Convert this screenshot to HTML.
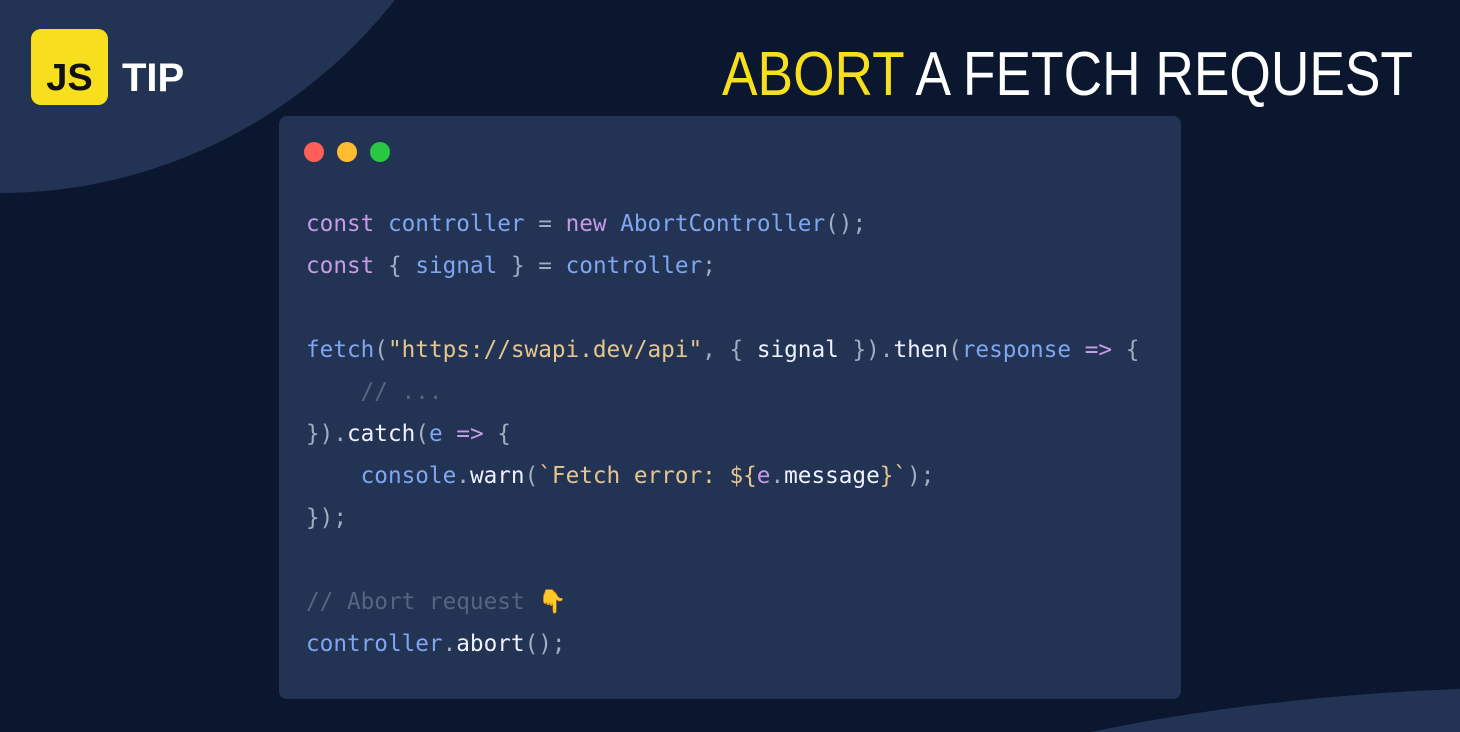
<!DOCTYPE html>
<html><head><meta charset="utf-8"><style>
html,body{margin:0;padding:0;width:1460px;height:732px;overflow:hidden;background:#0b172f}
#w{width:1460px;height:732px;overflow:hidden;position:relative;background:#0b172f;font-family:"Liberation Sans",sans-serif}
.card{position:absolute;left:279px;top:116px;width:902px;height:583px;background:#223354;border-radius:8px}
.dot{position:absolute;top:142px;width:20px;height:20px;border-radius:50%}
pre{position:absolute;left:306px;top:203px;margin:0;font-family:"DejaVu Sans Mono",monospace;font-size:22.7px;line-height:42px;color:#eef2ff}
.k{color:#c79be6}.b{color:#7fa6f0}.s{color:#e6c68e}.p{color:#a3acc2}.c{color:#59647e}.w{color:#eef2ff}
</style></head><body><div id="w">
<svg style="position:absolute;left:0;top:0" width="1460" height="732"><ellipse cx="0" cy="-330" rx="509" ry="523" fill="#223354"/><ellipse cx="1560" cy="1000" rx="909" ry="313" fill="#223354"/></svg>
<div style="position:absolute;left:31px;top:29px;width:77px;height:76px;background:#f7df1e;border-radius:10px"></div>
<div style="position:absolute;left:31px;top:54px;width:77px;text-align:center;font-weight:bold;font-size:38px;line-height:40px;color:#111;padding-top:4px">JS</div>
<div style="position:absolute;left:122px;top:56px;font-weight:bold;font-size:40px;line-height:44px;color:#fff">TIP</div>
<svg style="position:absolute;left:0;top:0" width="1460" height="120"><text x="1413" y="95" text-anchor="end" font-family="Liberation Sans" font-size="62" textLength="691" lengthAdjust="spacingAndGlyphs" fill="#fff"><tspan fill="#f7df1e">ABORT</tspan> A FETCH REQUEST</text></svg>
<div class="card"></div>
<div class="dot" style="left:304px;background:#fe5f57"></div>
<div class="dot" style="left:337px;background:#febc2e"></div>
<div class="dot" style="left:370px;background:#28c840"></div>
<pre><span class="k">const</span> <span class="b">controller</span> <span class="p">=</span> <span class="k">new</span> <span class="b">AbortController</span><span class="p">();</span>
<span class="k">const</span> <span class="p">{</span> <span class="b">signal</span> <span class="p">}</span> <span class="p">=</span> <span class="b">controller</span><span class="p">;</span>

<span class="b">fetch</span><span class="p">(</span><span class="s">"https://swapi.dev/api"</span><span class="p">,</span> <span class="p">{</span> <span class="w">signal</span> <span class="p">}).</span><span class="w">then</span><span class="p">(</span><span class="b">response</span> <span class="k">=&gt;</span> <span class="p">{</span>
    <span class="c">// ...</span>
<span class="p">}).</span><span class="w">catch</span><span class="p">(</span><span class="b">e</span> <span class="k">=&gt;</span> <span class="p">{</span>
    <span class="b">console</span><span class="p">.</span><span class="w">warn</span><span class="p">(</span><span class="s">`Fetch error: ${</span><span class="k">e</span><span class="p">.</span><span class="w">message</span><span class="s">}`</span><span class="p">);</span>
<span class="p">});</span>

<span class="c">// Abort request</span> <span style="color:#f7c948">👇</span>
<span class="b">controller</span><span class="p">.</span><span class="w">abort</span><span class="p">();</span></pre>
</div></body></html>
